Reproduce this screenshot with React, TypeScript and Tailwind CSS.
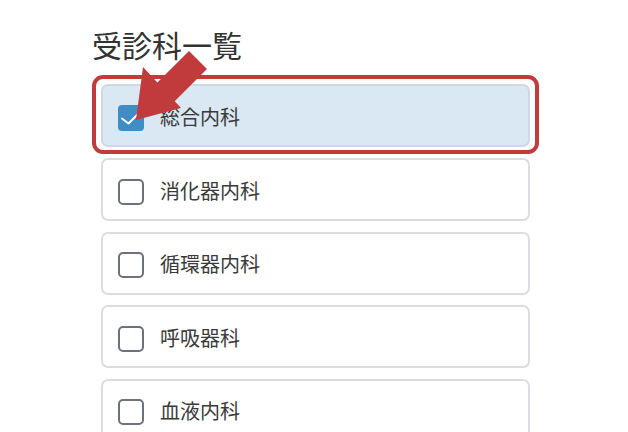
const departments = ['消化器内科', '循環器内科', '呼吸器科', '血液内科']

const font = { fontFamily: '"Noto Sans CJK JP", "Noto Sans", sans-serif' }

function Box({ checked }: { checked?: boolean }) {
  if (checked) {
    return (
      <span className="flex h-[26px] w-[26px] shrink-0 translate-y-[2px] items-center justify-center rounded-[4px] bg-[#3e8dc5]">
        <svg viewBox="0 0 26 26" className="h-[26px] w-[26px]">
          <polyline points="4,13.5 10.5,18.5 19,10" fill="none" stroke="#fff" strokeWidth="2" strokeLinecap="round" strokeLinejoin="round" />
        </svg>
      </span>
    )
  }
  return <span className="h-[26px] w-[26px] shrink-0 translate-y-[2px] rounded-[5px] border-2 border-[#6c717c] bg-white" />
}

function Row({ label, checked }: { label: string; checked?: boolean }) {
  return (
    <div
      className={`flex h-[63px] items-center gap-[16px] rounded-[7px] border-2 pl-[15px] ${
        checked ? 'border-[#cdd9e3] bg-[#d9e8f3]' : 'border-[#dcdde2] bg-white'
      }`}
    >
      <Box checked={checked} />
      <span className="translate-y-[1px] text-[20px] leading-none text-[#3a3a3a]">{label}</span>
    </div>
  )
}

export default function App() {
  return (
    <div className="relative h-[432px] w-[628px] overflow-hidden bg-white" style={font}>
      <div className="pl-[92px] pt-[29px]">
        <h1 className="text-[30px] leading-none font-normal text-[#333]">受診科一覧</h1>

        <div className="mt-[16px] w-[447px] rounded-[11px] border-4 border-[#c13b3c] px-[5px] pt-[5px] pb-[3px]">
          <Row label="総合内科" checked />
        </div>

        <div className="ml-[9px] flex w-[429px] flex-col gap-[10.5px] pt-[4px]">
          {departments.map((d) => (
            <Row key={d} label={d} />
          ))}
        </div>
      </div>

      {/* pointer arrow over the selected row */}
      <svg className="pointer-events-none absolute left-0 top-0 h-[432px] w-[628px]" viewBox="0 0 628 432">
        <polygon
          points="136,120 143,67 157.4,82.6 189,51 207,69 174.7,101.2 181,108"
          fill="#c13b3c"
        />
      </svg>
    </div>
  )
}
